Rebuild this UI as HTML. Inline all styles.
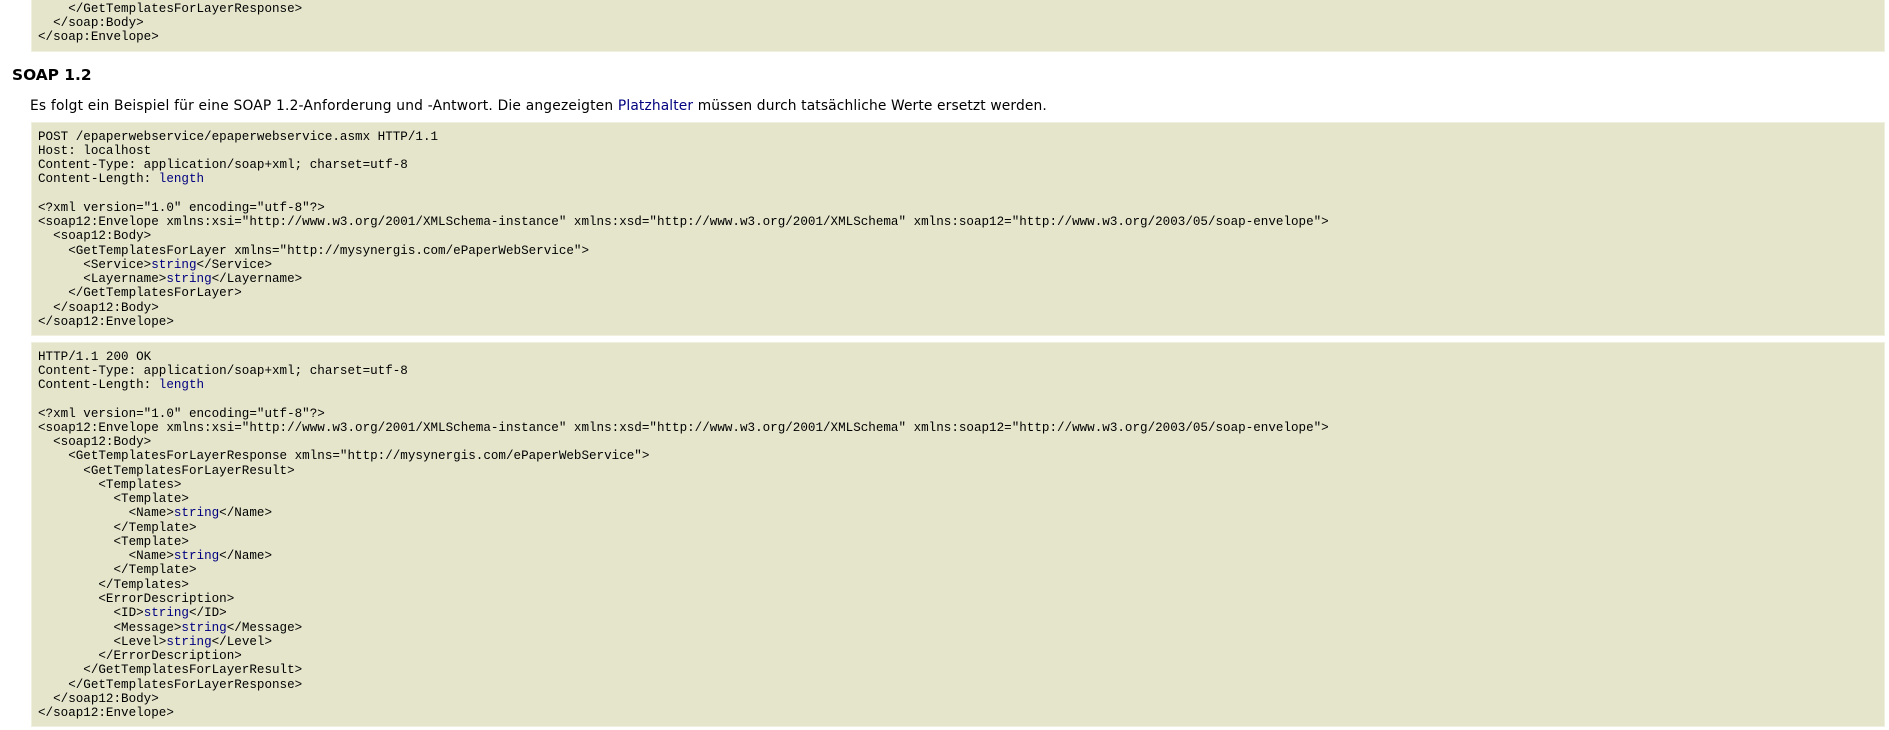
<!DOCTYPE html>
<html><head><meta charset="utf-8"><style>
html,body{margin:0;padding:0;background:#fff;width:1889px;height:730px;overflow:hidden;color:#000}
pre{position:absolute;left:31px;width:1840px;margin:0;background:#e5e5cc;border:1px solid #f0f0e0;padding:6.5px 6px 5.5px 6px;font:12.585px/14.27px "Liberation Mono",monospace;color:#000;box-sizing:content-box;overflow:hidden}
i{font-style:normal;color:#000080}
h2{position:absolute;left:12px;top:65px;margin:0;font:bold 15.4px/20px "DejaVu Sans",sans-serif}
p{position:absolute;left:30px;top:96px;margin:0;font:13.8px/20px "DejaVu Sans",sans-serif;letter-spacing:.2px;white-space:nowrap}
p a{color:#000080}
p span{letter-spacing:.13px}
</style></head><body>
<pre style="top:-6px;height:44px">    &lt;/GetTemplatesForLayerResponse&gt;
  &lt;/soap:Body&gt;
&lt;/soap:Envelope&gt;</pre>
<h2>SOAP 1.2</h2>
<p>Es folgt ein Beispiel für eine SOAP 1.2-Anforderung und -Antwort. Die angezeigten <span><a>Platzhalter</a> müssen durch tatsächliche Werte ersetzt werden.</span></p>
<pre style="top:122px;height:200px">POST /epaperwebservice/epaperwebservice.asmx HTTP/1.1
Host: localhost
Content-Type: application/soap+xml; charset=utf-8
Content-Length: <i>length</i>

&lt;?xml version="1.0" encoding="utf-8"?&gt;
&lt;soap12:Envelope xmlns:xsi="http://www.w3.org/2001/XMLSchema-instance" xmlns:xsd="http://www.w3.org/2001/XMLSchema" xmlns:soap12="http://www.w3.org/2003/05/soap-envelope"&gt;
  &lt;soap12:Body&gt;
    &lt;GetTemplatesForLayer xmlns="http://mysynergis.com/ePaperWebService"&gt;
      &lt;Service&gt;<i>string</i>&lt;/Service&gt;
      &lt;Layername&gt;<i>string</i>&lt;/Layername&gt;
    &lt;/GetTemplatesForLayer&gt;
  &lt;/soap12:Body&gt;
&lt;/soap12:Envelope&gt;</pre>
<pre style="top:342px;height:371px">HTTP/1.1 200 OK
Content-Type: application/soap+xml; charset=utf-8
Content-Length: <i>length</i>

&lt;?xml version="1.0" encoding="utf-8"?&gt;
&lt;soap12:Envelope xmlns:xsi="http://www.w3.org/2001/XMLSchema-instance" xmlns:xsd="http://www.w3.org/2001/XMLSchema" xmlns:soap12="http://www.w3.org/2003/05/soap-envelope"&gt;
  &lt;soap12:Body&gt;
    &lt;GetTemplatesForLayerResponse xmlns="http://mysynergis.com/ePaperWebService"&gt;
      &lt;GetTemplatesForLayerResult&gt;
        &lt;Templates&gt;
          &lt;Template&gt;
            &lt;Name&gt;<i>string</i>&lt;/Name&gt;
          &lt;/Template&gt;
          &lt;Template&gt;
            &lt;Name&gt;<i>string</i>&lt;/Name&gt;
          &lt;/Template&gt;
        &lt;/Templates&gt;
        &lt;ErrorDescription&gt;
          &lt;ID&gt;<i>string</i>&lt;/ID&gt;
          &lt;Message&gt;<i>string</i>&lt;/Message&gt;
          &lt;Level&gt;<i>string</i>&lt;/Level&gt;
        &lt;/ErrorDescription&gt;
      &lt;/GetTemplatesForLayerResult&gt;
    &lt;/GetTemplatesForLayerResponse&gt;
  &lt;/soap12:Body&gt;
&lt;/soap12:Envelope&gt;</pre>
</body></html>
